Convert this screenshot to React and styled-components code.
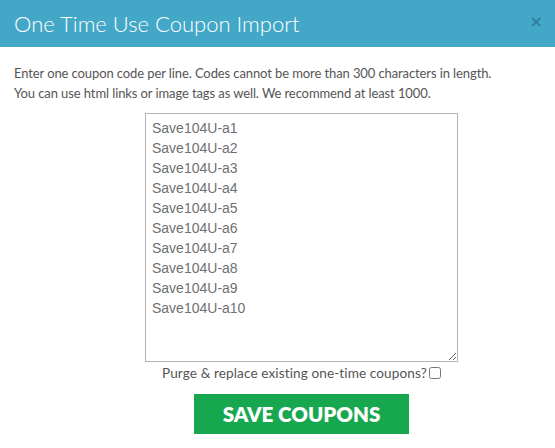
import React from "react";
import { styled, createGlobalStyle } from "styled-components";

const codes = Array.from({ length: 10 }, (_, i) => `Save104U-a${i + 1}`).join("\n");

export default function App() {
  return (
    <>
      <GlobalStyle />
      <Modal>
        <Header>
          <Title>One Time Use Coupon Import</Title>
          <Close aria-label="close">&times;</Close>
        </Header>
        <Body>
          <Intro>
            Enter one coupon code per line. Codes cannot be more than 300 characters in length.
            <br />
            You can use html links or image tags as well. We recommend at least 1000.
          </Intro>
          <Form>
            <Codes defaultValue={codes} spellCheck={false} />
            <PurgeLabel>
              Purge &amp; replace existing one-time coupons?
              <Check type="checkbox" />
            </PurgeLabel>
            <SaveButton>SAVE COUPONS</SaveButton>
          </Form>
        </Body>
      </Modal>
    </>
  );
}

const GlobalStyle = createGlobalStyle`
  html, body {
    margin: 0;
    padding: 0;
    background: #fff;
  }
  body {
    font-family: Lato, "Open Sans", sans-serif;
  }
`;

const Modal = styled.div`
  width: 555px;
  height: 448px;
  background: #fff;
  overflow: hidden;
`;

const Header = styled.div`
  height: 47px;
  background: #43a7c7;
  display: flex;
  align-items: center;
  justify-content: space-between;
  padding: 0 12px 0 14px;
  box-sizing: border-box;
`;

const Title = styled.h2`
  margin: 0;
  font-family: Lato, sans-serif;
  font-weight: 300;
  font-size: 22px;
  color: #fff;
  letter-spacing: 0;
`;

const Close = styled.span`
  font-family: "DejaVu Sans", sans-serif;
  font-weight: 700;
  font-size: 16px;
  color: #2f7f9c;
  line-height: 1;
  margin-top: -4px;
`;

const Body = styled.div`
  padding: 16px 14px 0;
`;

const Intro = styled.p`
  margin: 0 0 10px;
  font-size: 13px;
  line-height: 20px;
  letter-spacing: -0.1px;
  color: #555;
`;

const Form = styled.div`
  display: flex;
  flex-direction: column;
  align-items: center;
  padding-left: 48px;
`;

const Codes = styled.textarea`
  width: 313px;
  height: 249px;
  box-sizing: border-box;
  border: 1px solid #b4b4b4;
  padding: 4px 6px;
  font-family: "Liberation Sans", Arial, sans-serif;
  font-size: 14px;
  line-height: 20px;
  color: #707070;
  outline: none;
  margin: 0;
`;

const PurgeLabel = styled.label`
  display: flex;
  align-items: center;
  gap: 2px;
  margin-top: 2px;
  font-size: 13.6px;
  line-height: 18px;
  letter-spacing: 0.1px;
  color: #555;
`;

const Check = styled.input`
  width: 12px;
  height: 12px;
  margin: 0;
`;

const SaveButton = styled.button`
  margin-top: 12px;
  width: 215px;
  height: 40px;
  border: none;
  background: #17a84f;
  color: #fff;
  font-family: Lato, sans-serif;
  font-weight: 800;
  font-size: 20.5px;
  letter-spacing: 0;
  cursor: pointer;
`;
